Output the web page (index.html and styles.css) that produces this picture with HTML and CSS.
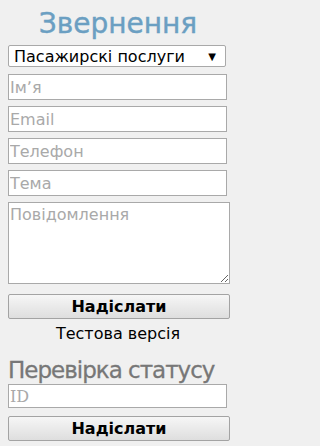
FILE: index.html
```html
<!DOCTYPE html>
<html lang="uk">
<head>
<meta charset="utf-8">
<link rel="stylesheet" href="styles.css">
</head>
<body>
<div class="page">
  <h1 class="title">Звернення</h1>
  <form class="form">
    <div class="select">
      <span>Пасажирскі послуги</span>
      <span class="arrow">▼</span>
    </div>
    <input class="field" type="text" placeholder="Імʼя">
    <input class="field" type="text" placeholder="Email">
    <input class="field" type="text" placeholder="Телефон">
    <input class="field" type="text" placeholder="Тема">
    <textarea class="area" placeholder="Повідомлення"></textarea>
    <button class="btn" type="button">Надіслати</button>
  </form>
  <p class="note">Тестова версія</p>
  <h2 class="subtitle">Перевірка статусу</h2>
  <form class="form">
    <input class="field id" type="text" placeholder="ID">
    <button class="btn" type="button">Надіслати</button>
  </form>
</div>
</body>
</html>
```
FILE: styles.css
```css
html, body {
  margin: 0;
  padding: 0;
  background: #f0f0f0;
}
body {
  padding: 0 8px;
  font-family: "DejaVu Sans", Verdana, sans-serif;
}
.page {
  width: 220px;
  display: flex;
  flex-direction: column;
}
.title {
  margin: 6px 0 0;
  height: 39px;
  text-align: center;
  font-family: "DejaVu Sans", sans-serif;
  font-weight: normal;
  font-size: 28px;
  color: #6b9fc2;
  line-height: 36px;
  -webkit-text-stroke: 0.4px #6b9fc2;
}
.form {
  display: flex;
  flex-direction: column;
  margin: 0;
}
.select {
  box-sizing: border-box;
  width: 218px;
  height: 22px;
  background: #fff;
  border: 1px solid #a9a9a9;
  border-radius: 2px;
  display: flex;
  justify-content: space-between;
  align-items: center;
  padding: 0 9px 0 5px;
  font-size: 16px;
  color: #000;
}
.arrow {
  font-size: 10px;
}
.field {
  box-sizing: border-box;
  width: 219px;
  height: 26px;
  margin: 7px 0 0;
  padding: 0 1px;
  border: 1px solid #a9a9a9;
  background: #fff;
  font-family: "DejaVu Sans", sans-serif;
  font-size: 16px;
  outline: none;
}
.field::placeholder, .area::placeholder {
  color: #a9a9a9;
}
.field + .field { margin-top: 6px; }
.field.id {
  margin-top: 2px;
  height: 24px;
  font-family: "DejaVu Serif", serif;
  font-size: 16px;
}
.area {
  box-sizing: border-box;
  width: 222px;
  height: 82px;
  margin: 6px 0 0;
  padding: 2px 1px;
  border: 1px solid #a9a9a9;
  background: #fff;
  font-family: "DejaVu Sans", sans-serif;
  font-size: 16px;
  resize: vertical;
  outline: none;
}
.btn {
  box-sizing: border-box;
  width: 222px;
  height: 25px;
  margin: 10px 0 0;
  border: 1px solid #a3a3a3;
  border-radius: 2px;
  background: linear-gradient(#f6f6f6, #dedede);
  font-family: "DejaVu Sans", sans-serif;
  font-weight: bold;
  font-size: 16px;
  color: #000;
  padding: 0;
}
.note {
  margin: 5px 0 0;
  text-align: center;
  font-size: 16px;
  line-height: 20px;
  color: #000;
}
.subtitle {
  margin: 14px 0 0;
  font-weight: normal;
  font-size: 23px;
  letter-spacing: -1px;
  line-height: 24px;
  color: #777;
  -webkit-text-stroke: 0.3px #777;
}
.form .field.id + .btn { margin-top: 8px; }
```
